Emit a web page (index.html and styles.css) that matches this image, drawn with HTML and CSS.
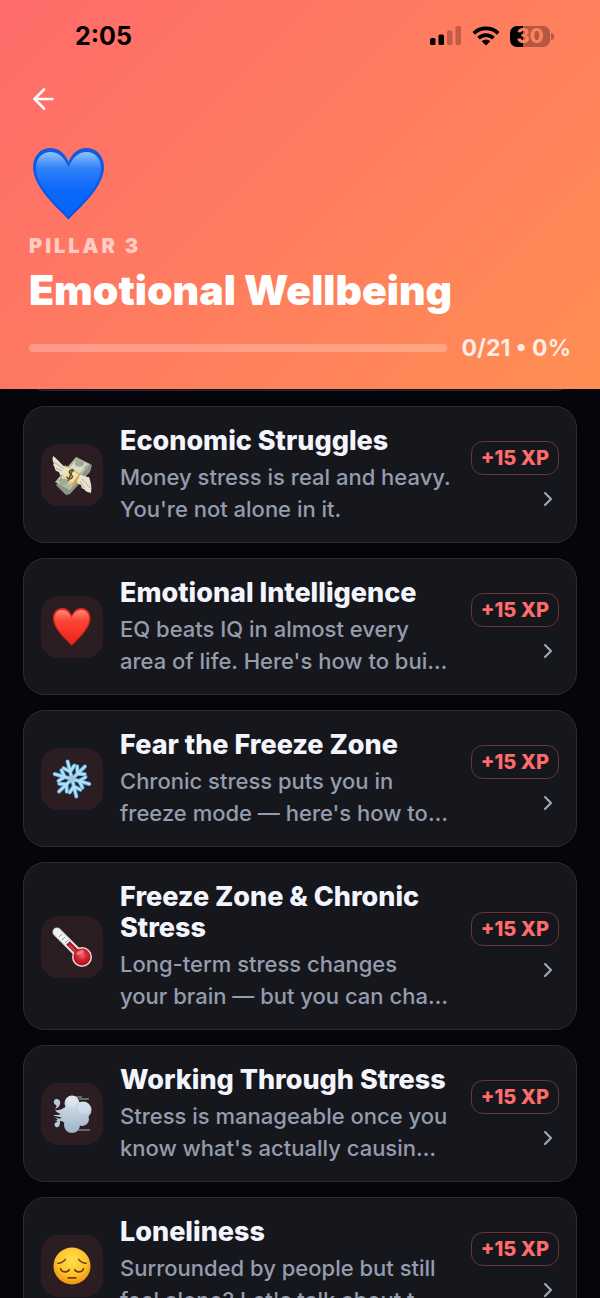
FILE: index.html
```
<!DOCTYPE html>
<html lang="en">
<head>
  <meta charset="UTF-8" />
  <meta name="viewport" content="width=device-width, initial-scale=1.0"/>
  <title>Emotional Wellbeing</title>
  <link rel="stylesheet" href="styles.css">
</head>
<body>
  <header class="hero">
    <div class="status-bar">
      <span class="time">2:05</span>
      <div class="status-icons">
        <svg width="32" height="20" viewBox="0 0 32 20">
          <rect x="0" y="12" width="5.5" height="7" rx="1.5"/>
          <rect x="8.5" y="8.5" width="5.5" height="10.5" rx="1.5"/>
          <rect x="17" y="4.5" width="5.5" height="14.5" rx="1.5" opacity=".25"/>
          <rect x="25.5" y="0" width="5.5" height="19" rx="1.5" opacity=".25"/>
        </svg>
        <svg width="28" height="20" viewBox="0 0 28 20">
          <g fill="none" stroke="#000" stroke-width="3.7">
            <path d="M1.8 7.3a17.5 17.5 0 0 1 24.4 0"/>
            <path d="M6.5 12.2a10.8 10.8 0 0 1 15 0"/>
          </g>
          <path d="M14 19.5l-4.3-4.3a6.2 6.2 0 0 1 8.600 0z"/>
        </svg>
        <div class="battery"><span class="battery-level">30</span></div>
      </div>
    </div>

    <button class="back" aria-label="Back">
      <svg width="22" height="22" viewBox="0 0 22 22" fill="none" stroke="#fff" stroke-width="2.6" stroke-linecap="round" stroke-linejoin="round">
        <path d="M19.500 11H1.500M11 1.500L1.500 11l9.500 9.500"/>
      </svg>
    </button>

    <svg class="hero-icon" width="72" height="72" viewBox="0 0 72 72">
      <defs>
        <linearGradient id="blue" x1="0" y1="0" x2="0" y2="1">
          <stop offset="0" stop-color="#1459dc"/>
          <stop offset=".5" stop-color="#0a5cf0"/>
          <stop offset="1" stop-color="#0450e8"/>
        </linearGradient>
        <linearGradient id="blueShine" x1="0" y1="0" x2="0" y2="1">
          <stop offset="0" stop-color="#8fc3ff"/>
          <stop offset=".25" stop-color="#2f80f6"/>
          <stop offset=".6" stop-color="#0a68fb"/>
          <stop offset="1" stop-color="#0563f8"/>
        </linearGradient>
      </defs>
      <path fill="url(#blue)" d="M35.500 71.500C26 61 0 40 0 19 0 8 7.500 0 17.500 0c8 0 14.500 5 18 14 3.500-9 10-14 18-14C63.500 0 71 8 71 19c0 21-26 42-35.500 52.500z"/>
      <path fill="url(#blueShine)" d="M35.500 69C26 58 3 38 3 20 3 10.500 9 4 17.500 4c8 0 14 5.500 18 15 4-9.500 10-15 18-15C62 4 68 10.500 68 20c0 18-23 38-32.500 49z"/>
    </svg>

    <p class="eyebrow">PILLAR 3</p>
    <h1>Emotional Wellbeing</h1>
    <div class="progress-row">
      <progress value="0" max="21" aria-labelledby="progress-text"></progress>
      <span id="progress-text" class="progress-text">0/21 • 0%</span>
    </div>
  </header>

  <main class="lessons">
    <div class="card card-passed"></div>

    <a class="card" href="#economic-struggles">
      <span class="tile">
        <svg width="40" height="40" viewBox="0 0 40 40">
          <path fill="#8f9485" d="M4 30l18-23 3-4 15 7-2 7-20 22-4 1z"/>
          <path fill="#b7bba9" d="M3 27l21-25 14 7-20 26z"/>
          <path fill="#d9dcc9" d="M6 27L25 4l10 5-18 22z"/>
          <ellipse cx="27.500" cy="8.500" rx="4.500" ry="3.200" fill="#a1aa95"/>
          <ellipse cx="12" cy="27" rx="4.500" ry="3.200" fill="#a1aa95"/>
          <path d="M23 5.500l4-1M32 13l3-2M7 26l3-3M15 32l3-3" stroke="#88917b" stroke-width="1"/>
          <path fill="#d2a634" d="M13 10l17 10-8 11-14-12z"/>
          <path fill="#eee1b3" d="M15 11.500l12 8-7 9-10-8z"/>
          <path d="M22 16c-3-2-6 0-4 2.500s4 3 1 5c-2 1-4-.5-4-2M21 14l-5 12" fill="none" stroke="#625020" stroke-width="1.600"/>
          <path fill="#e8e2d3" d="M15 13C9 10 7 5 1 1c-1 4 0 6 1 8-1 0-1 1 1 4-1 1 2 4 4 4l1 3 5-1zM28 20c4 0 5 2 9 2 2 6 3 10 2 16-4-1-6-2-7-4-2 0-3-2-3-4-3-1-4-2-4-4z"/>
          <path d="M2 7l10 7M4 13l6 3M38 33l-8-9M32 33l-4-7" stroke="#b8b0a0" stroke-width="1" fill="none"/>
        </svg>
      </span>
      <span class="info">
        <span class="title">Economic Struggles</span>
        <span class="desc">Money stress is real and heavy. You're not alone in it.</span>
      </span>
      <span class="side">
        <span class="xp">+15 XP</span>
        <svg class="chevron" viewBox="0 0 22 22"><path d="M8 5l6 6-6 6"/></svg>
      </span>
    </a>

    <a class="card" href="#emotional-intelligence">
      <span class="tile">
        <svg width="38" height="38" viewBox="0 0 72 72">
          <defs>
            <linearGradient id="red" x1="0" y1="0" x2="0" y2="1">
              <stop offset="0" stop-color="#ff8a78"/>
              <stop offset=".3" stop-color="#fc4636"/>
              <stop offset="1" stop-color="#ee2018"/>
            </linearGradient>
          </defs>
          <path fill="#dd2a1f" d="M35.500 71.500C26 61 0 40 0 19 0 8 7.500 0 17.500 0c8 0 14.500 5 18 14 3.500-9 10-14 18-14C63.500 0 71 8 71 19c0 21-26 42-35.500 52.500z"/>
          <path fill="url(#red)" d="M35.500 69C26 58 3 38 3 20 3 10.500 9 4 17.500 4c8 0 14 5.500 18 15 4-9.500 10-15 18-15C62 4 68 10.500 68 20c0 18-23 38-32.500 49z"/>
        </svg>
      </span>
      <span class="info">
        <span class="title">Emotional Intelligence</span>
        <span class="desc">EQ beats IQ in almost every area of life. Here's how to bui…</span>
      </span>
      <span class="side">
        <span class="xp">+15 XP</span>
        <svg class="chevron" viewBox="0 0 22 22"><path d="M8 5l6 6-6 6"/></svg>
      </span>
    </a>

    <a class="card" href="#fear-the-freeze-zone">
      <span class="tile">
        <svg width="40" height="40" viewBox="0 0 40 40">
          <defs>
            <g id="arm" fill="none" stroke-linecap="round" stroke-linejoin="round">
              <path d="M20 20V2M20 12.500l-5.500-5M20 12.500l5.500-5"/>
            </g>
            <g id="flake">
              <use href="#arm"/>
              <use href="#arm" transform="rotate(60 20 20)"/>
              <use href="#arm" transform="rotate(120 20 20)"/>
              <use href="#arm" transform="rotate(180 20 20)"/>
              <use href="#arm" transform="rotate(240 20 20)"/>
              <use href="#arm" transform="rotate(300 20 20)"/>
            </g>
          </defs>
          <g transform="rotate(-14 20 20)">
            <use href="#flake" stroke="#58a9d6" stroke-width="4"/>
            <use href="#flake" stroke="#b0e0f8" stroke-width="2.400"/>
            <circle cx="20" cy="20" r="3.500" fill="#a7c6dd"/>
          </g>
        </svg>
      </span>
      <span class="info">
        <span class="title">Fear the Freeze Zone</span>
        <span class="desc">Chronic stress puts you in freeze mode — here's how to…</span>
      </span>
      <span class="side">
        <span class="xp">+15 XP</span>
        <svg class="chevron" viewBox="0 0 22 22"><path d="M8 5l6 6-6 6"/></svg>
      </span>
    </a>

    <a class="card" href="#freeze-zone-chronic-stress">
      <span class="tile">
        <svg width="40" height="40" viewBox="0 0 40 40">
          <defs>
            <radialGradient id="bulb" cx=".5" cy=".4" r=".6">
              <stop offset="0" stop-color="#f4626a"/>
              <stop offset=".5" stop-color="#d3212e"/>
              <stop offset="1" stop-color="#a90f1c"/>
            </radialGradient>
          </defs>
          <path d="M5 5l24 24" stroke="#c9cdcd" stroke-width="9" stroke-linecap="round"/>
          <path d="M5 5l22 22" stroke="#f0f2f0" stroke-width="7" stroke-linecap="round"/>
          <circle cx="30" cy="30" r="10" fill="#dfdbdd"/>
          <path d="M16 16l12 12" stroke="#a31924" stroke-width="5"/>
          <path d="M17 18l10 10" stroke="#dd3744" stroke-width="2"/>
          <circle cx="30" cy="30" r="8.500" fill="url(#bulb)"/>
          <ellipse cx="28" cy="25.500" rx="4" ry="2" fill="#fff" opacity=".35" transform="rotate(-25 28 25.500)"/>
          <path d="M7 10l3-3M10 13l3-3M13 16l3-3" stroke="#949c9b" stroke-width="1"/>
        </svg>
      </span>
      <span class="info">
        <span class="title">Freeze Zone &amp; Chronic Stress</span>
        <span class="desc">Long-term stress changes<br>your brain — but you can cha…</span>
      </span>
      <span class="side">
        <span class="xp">+15 XP</span>
        <svg class="chevron" viewBox="0 0 22 22"><path d="M8 5l6 6-6 6"/></svg>
      </span>
    </a>

    <a class="card" href="#working-through-stress">
      <span class="tile">
        <svg width="40" height="40" viewBox="0 0 40 40">
          <defs>
            <linearGradient id="cloud" gradientUnits="userSpaceOnUse" x1="22" y1="1" x2="22" y2="39">
              <stop offset="0" stop-color="#dbe7f2"/>
              <stop offset=".5" stop-color="#bccddb"/>
              <stop offset="1" stop-color="#9fb4c7"/>
            </linearGradient>
          </defs>
          <path d="M22 3h8M27 5h10M26 36h12" stroke="#9fb1c1" stroke-width="1"/>
          <g fill="url(#cloud)">
            <circle cx="20" cy="9" r="7.500"/>
            <circle cx="31" cy="16" r="8.500"/>
            <circle cx="30" cy="25" r="7"/>
            <circle cx="20" cy="31" r="8"/>
            <path d="M3 16c6 1 8-2 12-4l13 3v14l-14 1c-3-3-6-4-11-3 3-2 5-3 7-3-2-2-7-1-9-3 4 0 6 0 8-1-2-1-4-1-6-4z"/>
          </g>
          <path fill="#b9cbda" d="M4 5c3 0 5 2 4 5-1 4-4 5-8 5 4 0 5-2 4-4-3-1-3-5 0-6zM4 33c-2-1-2-5 1-5 2-3 0-4-3-4 4-1 6 1 6 4s-1 6-4 5z"/>
          <circle cx="20" cy="8" r="5" fill="#e9f1f8" opacity=".4"/>
          <circle cx="32" cy="14" r="6" fill="#e9f1f8" opacity=".3"/>
        </svg>
      </span>
      <span class="info">
        <span class="title">Working Through Stress</span>
        <span class="desc">Stress is manageable once you know what's actually causin…</span>
      </span>
      <span class="side">
        <span class="xp">+15 XP</span>
        <svg class="chevron" viewBox="0 0 22 22"><path d="M8 5l6 6-6 6"/></svg>
      </span>
    </a>

    <a class="card" href="#loneliness">
      <span class="tile">
        <svg width="38" height="38" viewBox="0 0 40 40">
          <defs>
            <radialGradient id="face" cx=".5" cy=".35" r=".65">
              <stop offset="0" stop-color="#ffe04b"/>
              <stop offset=".6" stop-color="#fdc32c"/>
              <stop offset="1" stop-color="#ee9010"/>
            </radialGradient>
          </defs>
          <circle cx="20" cy="20" r="19.500" fill="url(#face)"/>
          <g fill="none" stroke="#70400c" stroke-width="1.600" stroke-linecap="round">
            <path d="M5 17c4 0 6-1 8-4M35 17c-4 0-6-1-8-4"/>
            <path d="M8 23c1 4 8 4 9 1M32 23c-1 4-8 4-9 1M16 32.500h8" stroke-width="1.800"/>
          </g>
        </svg>
      </span>
      <span class="info">
        <span class="title">Loneliness</span>
        <span class="desc">Surrounded by people but still feel alone? Let's talk about t…</span>
      </span>
      <span class="side">
        <span class="xp">+15 XP</span>
        <svg class="chevron" viewBox="0 0 22 22"><path d="M8 5l6 6-6 6"/></svg>
      </span>
    </a>
  </main>
</body>
</html>
```
FILE: styles.css
```
* {
  box-sizing: border-box;
}

body {
  margin: 0;
  height: 100vh;
  overflow: hidden;
  font-family: Inter, "Liberation Sans", sans-serif;
  background: #05060b;
  color: #f4f5fc;
}

.hero {
  position: relative;
  z-index: 1;
  display: flex;
  flex-direction: column;
  padding: 20px 29px 27px;
  background: linear-gradient(135deg, #ff6b6b, #ff8e53);
  color: #fff;
}

.status-bar {
  display: flex;
  justify-content: space-between;
  align-items: center;
  height: 32px;
  padding: 0 18px 0 46px;
  color: #000;
}

.time {
  font-size: 25px;
  font-weight: 700;
}

.status-icons {
  display: flex;
  align-items: center;
  gap: 10px;
}

.battery {
  position: relative;
  width: 40px;
  height: 21px;
  margin-right: 3px;
  border-radius: 7px;
  background: linear-gradient(90deg, #000 32%, rgba(0, 0, 0, 0.3) 32%);
  text-align: center;
}

.battery::after {
  content: "";
  position: absolute;
  top: 7px;
  right: -4px;
  width: 3px;
  height: 7px;
  border-radius: 0 4px 4px 0;
  background: rgba(0, 0, 0, 0.3);
}

.battery-level {
  display: block;
  font-size: 20px;
  line-height: 21px;
  font-weight: 800;
  color: #ff825b;
}

.back {
  align-self: flex-start;
  margin: 36px 0 0 4px;
  padding: 0;
  border: none;
  background: none;
  line-height: 0;
  cursor: pointer;
}

.hero-icon {
  margin: 38px 0 0 4px;
}

.eyebrow {
  margin: 13px 0 0;
  font-size: 20px;
  line-height: 26px;
  font-weight: 900;
  letter-spacing: 3px;
  color: rgba(255, 255, 255, 0.65);
}

h1 {
  margin: 6px 0 0;
  font-size: 41px;
  line-height: 50px;
  font-weight: 900;
}

.progress-row {
  display: flex;
  align-items: center;
  gap: 14px;
  margin-top: 19px;
}

progress {
  flex: 1;
  min-width: 0;
  height: 8px;
  appearance: none;
  border: none;
  border-radius: 4px;
  overflow: hidden;
  background: rgba(255, 255, 255, 0.25);
}

progress::-webkit-progress-bar {
  background: transparent;
}

progress::-webkit-progress-value {
  background: #fff;
}

.progress-text {
  font-size: 23px;
  line-height: 28px;
  font-weight: 700;
  color: rgba(255, 255, 255, 0.85);
}

.lessons {
  display: flex;
  flex-direction: column;
  gap: 15px;
  margin-top: -41px;
  padding: 0 23px;
}

.card {
  display: flex;
  flex-shrink: 0;
  align-items: center;
  gap: 17px;
  padding: 18px 17px 17px;
  border: 1px solid #2b2c31;
  border-radius: 22px;
  background: #16171c;
  color: inherit;
  text-decoration: none;
}

.card-passed {
  height: 43px;
}

.tile {
  display: flex;
  flex-shrink: 0;
  align-items: center;
  justify-content: center;
  width: 62px;
  height: 62px;
  border-radius: 18px;
  background: #2b1d21;
}

.info {
  flex: 1;
  min-width: 0;
}

.title {
  display: block;
  font-size: 27px;
  line-height: 31px;
  font-weight: 800;
}

.desc {
  display: block;
  margin-top: 5px;
  font-size: 22px;
  line-height: 32px;
  font-weight: 500;
  color: #949cae;
}

.side {
  display: flex;
  flex-direction: column;
  align-items: flex-end;
  gap: 13px;
}

.xp {
  padding: 0 9px;
  border: 1px solid #6b3439;
  border-radius: 12px;
  font-size: 20px;
  line-height: 32px;
  font-weight: 800;
  color: #ff6b6b;
  white-space: nowrap;
}

.chevron {
  width: 22px;
  height: 22px;
  fill: none;
  stroke: #a3abbb;
  stroke-width: 2;
  stroke-linecap: round;
  stroke-linejoin: round;
}
```
